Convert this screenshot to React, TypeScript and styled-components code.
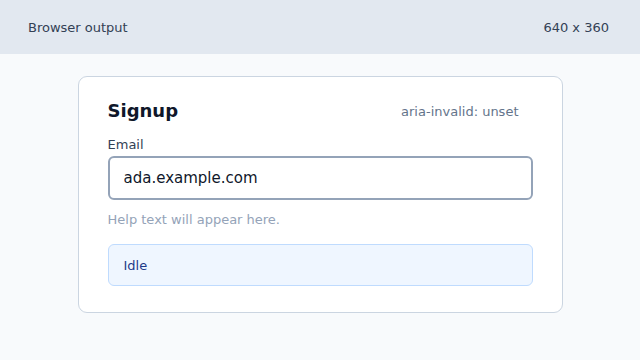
import React from "react";
import styled, { createGlobalStyle } from "styled-components";

const Global = createGlobalStyle`
  html, body { margin: 0; padding: 0; }
  body {
    background: #f8fafc;
    font-family: "DejaVu Sans", "Liberation Sans", sans-serif;
    width: 640px;
    height: 360px;
    overflow: hidden;
  }
`;

const Page = styled.div`
  display: flex;
  flex-direction: column;
  width: 640px;
  height: 360px;
  background: #f8fafc;
`;

const TopBar = styled.header`
  height: 54px;
  flex: none;
  background: #e2e8f0;
  display: flex;
  align-items: center;
  justify-content: space-between;
  padding: 0 31px 0 28px;
  font-size: 13px;
  color: #334155;
`;

const Stage = styled.main`
  display: flex;
  justify-content: center;
  padding-top: 22px;
`;

const Card = styled.section`
  box-sizing: border-box;
  width: 485px;
  background: #ffffff;
  border: 1px solid #cbd5e1;
  border-radius: 9px;
  padding: 23px 29px 26px 29px;
  display: flex;
  flex-direction: column;
`;

const TitleRow = styled.div`
  display: flex;
  align-items: center;
  justify-content: space-between;
  height: 22px;
`;

const Title = styled.h1`
  margin: 0;
  font-size: 18px;
  line-height: 22px;
  font-weight: 700;
  color: #0f172a;
`;

const StateTag = styled.span`
  font-size: 13px;
  color: #64748b;
  margin-right: 14px;
`;

const Label = styled.label`
  margin-top: 15px;
  font-size: 13px;
  line-height: 16px;
  color: #334155;
`;

const Input = styled.input`
  box-sizing: border-box;
  margin-top: 3px;
  width: 100%;
  height: 44px;
  border: 2px solid #94a3b8;
  border-radius: 6px;
  padding: 0 14px;
  font-family: inherit;
  font-size: 15px;
  color: #0f172a;
  background: #ffffff;
  outline: none;
`;

const Help = styled.p`
  margin: 12px 0 0;
  font-size: 13px;
  line-height: 16px;
  color: #94a3b8;
`;

const Status = styled.div`
  box-sizing: border-box;
  margin-top: 16px;
  height: 42px;
  display: flex;
  align-items: center;
  padding: 0 15px;
  background: #eff6ff;
  border: 1px solid #bfdbfe;
  border-radius: 6px;
  font-size: 13px;
  color: #1e3a8a;
`;

export default function App() {
  return (
    <Page>
      <Global />
      <TopBar>
        <span>Browser output</span>
        <span>640 x 360</span>
      </TopBar>
      <Stage>
        <Card>
          <TitleRow>
            <Title>Signup</Title>
            <StateTag>aria-invalid: unset</StateTag>
          </TitleRow>
          <Label htmlFor="email">Email</Label>
          <Input id="email" defaultValue="ada.example.com" />
          <Help>Help text will appear here.</Help>
          <Status>Idle</Status>
        </Card>
      </Stage>
    </Page>
  );
}
